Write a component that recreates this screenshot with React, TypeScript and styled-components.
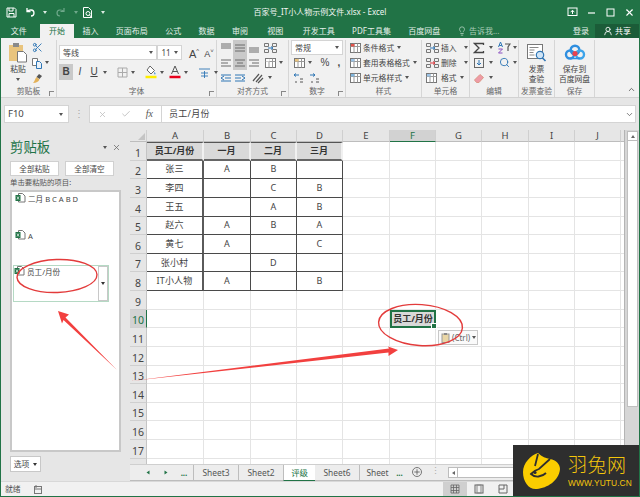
import React from 'react'
import styled, { createGlobalStyle } from 'styled-components'
import { Lightbulb, Scissors, X, Check, ChevronDown, ChevronUp, Plus, Search, UserRound } from 'lucide-react'

const GlobalStyle = createGlobalStyle`
  html, body {
    margin: 0;
    padding: 0;
    background: #e6e6e6;
  }
  * {
    box-sizing: border-box;
  }
`

const Page = styled.div`
  position: relative;
  width: 640px;
  height: 497px;
  display: flex;
  flex-direction: column;
  overflow: hidden;
  background: #e6e6e6;
  border-left: 1px solid #217346;
  border-right: 1px solid #217346;
  border-bottom: 1px solid #217346;
  color: #444;
  font-family: 'Noto Sans', 'Noto Sans CJK SC', sans-serif;
  font-size: 8px;
  line-height: 12px;
`

const Caret = styled.span<{ $color?: string; $ml?: number }>`
  display: inline-block;
  flex-shrink: 0;
  width: 0;
  height: 0;
  margin-left: ${(p) => p.$ml ?? 0}px;
  border-left: 2.5px solid transparent;
  border-right: 2.5px solid transparent;
  border-top: 3px solid ${(p) => p.$color ?? '#555'};
`

/* title bar */
const TitleBar = styled.div`
  height: 24px;
  display: grid;
  grid-template-columns: 1fr auto 1fr;
  align-items: center;
  background: #217346;
  color: #f2f7f4;
`

const QuickBar = styled.div`
  display: flex;
  align-items: center;
  padding-left: 4px;
`

const QuickSlot = styled.span<{ $w: number }>`
  width: ${(p) => p.$w}px;
  display: flex;
  justify-content: center;
  align-items: center;
`

const TitleText = styled.div`
  font-size: 8px;
  white-space: nowrap;
`

const WindowButtons = styled.div`
  display: flex;
  justify-content: flex-end;
`

const WindowButton = styled.span`
  width: 19px;
  display: flex;
  justify-content: center;
  align-items: center;
`

/* tab row */
const TabBar = styled.div`
  height: 14px;
  display: flex;
  align-items: stretch;
  background: #217346;
  color: #e4efe9;
  font-size: 8px;
  padding-left: 1px;
`

const Tab = styled.div<{ $active?: boolean; $mr?: number }>`
  padding: 0 8.7px;
  margin-right: ${(p) => p.$mr ?? 0}px;
  display: flex;
  align-items: center;
  white-space: nowrap;
  background: ${(p) => (p.$active ? '#f1f1f1' : 'transparent')};
  color: ${(p) => (p.$active ? '#217346' : 'inherit')};
`

const TellMe = styled.div`
  display: flex;
  align-items: center;
  gap: 2px;
  margin-left: 8px;
  color: #a9cdb8;
`

const TabRight = styled.div`
  margin-left: auto;
  display: flex;
  align-items: stretch;
`

const Login = styled.div`
  display: flex;
  align-items: center;
  margin-right: 6px;
`

const Share = styled.div`
  width: 44px;
  display: flex;
  align-items: center;
  justify-content: center;
  gap: 2px;
  background: #1b5c38;
  color: #fff;
`

/* ribbon */
const Ribbon = styled.div`
  position: relative;
  height: 60px;
  display: flex;
  background: #f1f1f1;
  border-bottom: 1px solid #d2d2d2;
`

const Group = styled.div<{ $w: number }>`
  width: ${(p) => p.$w}px;
  margin-top: 2px;
  display: flex;
  flex-direction: column;
  border-right: 1px solid #d6d6d6;
`

const GroupBody = styled.div<{ $pl?: number }>`
  flex: 1;
  display: flex;
  padding-left: ${(p) => p.$pl ?? 0}px;
`

const GroupStack = styled(GroupBody)`
  flex-direction: column;
`

const GroupLabel = styled.div`
  position: relative;
  height: 12px;
  text-align: center;
  color: #666;
  font-size: 7.8px;
  line-height: 12px;
  white-space: nowrap;
`

const Launcher = styled.span`
  position: absolute;
  right: 2px;
  bottom: 1px;
  width: 5px;
  height: 5px;
  border-left: 1px solid #888;
  border-top: 1px solid #888;
`

const BigButton = styled.div<{ $w: number }>`
  width: ${(p) => p.$w}px;
  display: flex;
  flex-direction: column;
  align-items: center;
  padding-top: 3px;
  font-size: 7.8px;
  line-height: 10px;
  text-align: center;
  white-space: nowrap;
`

const BigIcon = styled.span`
  height: 19px;
  margin-bottom: 2px;
  display: flex;
  align-items: center;
`

const SmallColumn = styled.div`
  display: flex;
  flex-direction: column;
`

const ToolRow = styled.div<{ $h?: number }>`
  height: ${(p) => p.$h ?? 15}px;
  display: flex;
  align-items: center;
  white-space: nowrap;
`

const Slot = styled.span<{ $w: number; $on?: boolean }>`
  width: ${(p) => p.$w}px;
  height: 100%;
  flex-shrink: 0;
  display: flex;
  align-items: center;
  justify-content: center;
  background: ${(p) => (p.$on ? '#c9c9c9' : 'transparent')};
`

const Glyph = styled.span<{ $bold?: boolean; $italic?: boolean; $under?: boolean }>`
  font-family: 'Liberation Sans', sans-serif;
  font-size: 10px;
  color: #444;
  font-weight: ${(p) => (p.$bold ? 700 : 400)};
  font-style: ${(p) => (p.$italic ? 'italic' : 'normal')};
  text-decoration: ${(p) => (p.$under ? 'underline' : 'none')};
`

const Select = styled.div<{ $w: number }>`
  width: ${(p) => p.$w}px;
  height: 15px;
  display: flex;
  align-items: center;
  justify-content: space-between;
  padding: 0 3px;
  background: #fff;
  border: 1px solid #d4d4d4;
  font-size: 8px;
`

const StyleRow = styled(ToolRow)`
  font-size: 7.8px;
  gap: 1px;
`

const Divider = styled.span`
  width: 1px;
  height: 13px;
  margin: 0 4px;
  background: #d6d6d6;
`

const Collapse = styled.span`
  position: absolute;
  right: 3px;
  bottom: 0;
  color: #555;
`

/* formula bar */
const FormulaBar = styled.div`
  height: 32px;
  display: flex;
  align-items: flex-start;
  padding: 7px 3px 0;
`

const NameBox = styled.div`
  width: 65px;
  height: 18px;
  display: flex;
  align-items: center;
  justify-content: space-between;
  padding: 0 5px 0 3px;
  background: #fff;
  border: 1px solid #d4d4d4;
  font-size: 9.5px;
`

const Grip = styled.span`
  width: 20px;
  text-align: center;
  color: #a8a8a8;
  line-height: 17px;
  font-size: 10px;
`

const FnPanel = styled.div`
  width: 72px;
  height: 18px;
  display: flex;
  align-items: center;
  justify-content: space-around;
  padding: 0 1px;
  background: #fff;
  border: 1px solid #d4d4d4;
  border-right: none;
  color: #bbb;
`

const FnMark = styled.span`
  font-family: 'Liberation Serif', serif;
  font-style: italic;
  font-size: 10px;
  color: #555;
`

const FormulaInput = styled.div`
  flex: 1;
  height: 18px;
  display: flex;
  align-items: center;
  justify-content: space-between;
  padding: 0 1px 0 7px;
  background: #fff;
  border: 1px solid #d4d4d4;
  font-size: 9px;
  letter-spacing: 0.3px;
`

/* body */
const Main = styled.div`
  flex: 1;
  min-height: 0;
  display: flex;
`

const Pane = styled.div`
  width: 129px;
  display: flex;
  flex-direction: column;
  padding: 10px 9px 9px;
`

const PaneHead = styled.div`
  height: 15px;
  display: flex;
  align-items: center;
`

const PaneTitle = styled.div`
  flex: 1;
  color: #217346;
  font-size: 13.4px;
  line-height: 15px;
`

const PaneClose = styled.span`
  margin-left: 5px;
  color: #666;
  display: flex;
`

const PaneButtons = styled.div`
  margin-top: 6px;
  display: flex;
  gap: 6px;
`

const PaneButton = styled.div`
  width: 49px;
  height: 15px;
  display: flex;
  align-items: center;
  justify-content: center;
  background: #fff;
  border: 1px solid #d0d0d0;
  font-size: 7.6px;
`

const PaneHint = styled.div`
  height: 12px;
  font-size: 7.4px;
  color: #555;
  white-space: nowrap;
`

const ClipList = styled.div`
  flex: 1;
  margin-top: 2px;
  width: 111px;
  display: flex;
  flex-direction: column;
  padding: 0 1px;
  background: #fff;
  border: 2px solid #c8c8c8;
`

const ClipItem = styled.div<{ $h: number; $on?: boolean }>`
  height: ${(p) => p.$h}px;
  margin-left: ${(p) => (p.$on ? 0 : 1)}px;
  width: ${(p) => (p.$on ? '96px' : 'auto')};
  display: flex;
  align-items: flex-start;
  gap: 2px;
  font-size: 7.6px;
  border: 1px solid ${(p) => (p.$on ? '#b5d9c4' : 'transparent')};
`

const ClipText = styled.span`
  flex: 1;
  white-space: nowrap;
`

const ClipDrop = styled.span`
  width: 10px;
  align-self: stretch;
  display: flex;
  align-items: center;
  justify-content: center;
  border: 1px solid #c8c8c8;
`

const OptionsButton = styled.div`
  margin-top: 4px;
  width: 31px;
  height: 16px;
  display: flex;
  align-items: center;
  justify-content: center;
  gap: 4px;
  background: #fff;
  border: 1px solid #c8c8c8;
  font-size: 7.8px;
`

const Sheet = styled.div`
  flex: 1;
  min-width: 0;
  display: flex;
  flex-direction: column;
`

const SheetBody = styled.div`
  flex: 1;
  min-height: 0;
  display: flex;
`

const CellGrid = styled.div`
  position: relative;
  width: 495px;
  display: grid;
  grid-template-columns: 17px 57px 47px 46px 46px 47px 46px 46px 47px 46px 46px 4px;
  grid-template-rows: 12px repeat(18, 18.63px);
  overflow: hidden;
  background: #fff;
  border-right: 1px solid #b4b4b4;
`

const Corner = styled.div`
  background: #e6e6e6;
  border-right: 1px solid #cfcfcf;
  border-bottom: 1px solid #bdbdbd;
  display: flex;
  align-items: flex-end;
  justify-content: flex-end;
  padding: 0 1px 1px 0;
  &::after {
    content: '';
    border-left: 7px solid transparent;
    border-bottom: 7px solid #c4c4c4;
  }
`

const ColHead = styled.div<{ $on?: boolean }>`
  display: flex;
  align-items: center;
  justify-content: center;
  font-size: 9.5px;
  background: ${(p) => (p.$on ? '#d2d2d2' : '#e6e6e6')};
  color: ${(p) => (p.$on ? '#217346' : '#444')};
  border-right: 1px solid #cfcfcf;
  border-bottom: 1px solid ${(p) => (p.$on ? '#217346' : '#bdbdbd')};
`

const RowHead = styled.div<{ $on?: boolean }>`
  display: flex;
  align-items: flex-end;
  justify-content: center;
  font-size: 10.5px;
  line-height: 14px;
  background: ${(p) => (p.$on ? '#d2d2d2' : '#e6e6e6')};
  color: ${(p) => (p.$on ? '#217346' : '#444')};
  border-bottom: 1px solid #cfcfcf;
  border-right: 1px solid ${(p) => (p.$on ? '#217346' : '#c4c4c4')};
`

const Cell = styled.div`
  border-right: 1.5px solid #e4e4e4;
  border-bottom: 1.5px solid #e4e4e4;
`

const DataCell = styled.div<{ $first?: boolean }>`
  display: flex;
  align-items: center;
  justify-content: center;
  font-size: 9px;
  letter-spacing: 0.2px;
  color: #444;
  border-right: ${(p) => (p.$first ? '2px solid #5a5a5a' : '1px solid #4a4a4a')};
  border-bottom: 1.5px solid #4a4a4a;
  white-space: nowrap;
`

const HeadCell = styled.div`
  display: flex;
  align-items: center;
  justify-content: center;
  font-size: 9px;
  font-weight: 700;
  color: #333;
  background: #d9d9d9;
  border-top: 1px solid #555;
  border-right: 2px solid #f0f0f0;
  border-bottom: 2px solid #666;
  white-space: nowrap;
`

const PickedCell = styled.div`
  position: relative;
  display: flex;
  align-items: center;
  justify-content: center;
  font-size: 9px;
  font-weight: 700;
  color: #333;
  background: #d9d9d9;
  border: 2px solid #217346;
  white-space: nowrap;
  &::after {
    content: '';
    position: absolute;
    right: -3px;
    bottom: -3px;
    width: 4px;
    height: 4px;
    background: #217346;
    border: 0.5px solid #fff;
  }
`

const PasteTag = styled.div`
  position: absolute;
  left: 308px;
  top: 200px;
  width: 40px;
  height: 15px;
  display: flex;
  align-items: center;
  gap: 1px;
  padding-left: 2px;
  background: #fafafa;
  border: 1px solid #c8c8c8;
  font-size: 8px;
  color: #666;
`

const ScrollBar = styled.div`
  flex: 1;
  display: flex;
  flex-direction: column;
  padding: 1px 1px 0 2px;
  background: #d6d6d6;
`

const ScrollUp = styled.div`
  height: 10px;
  display: flex;
  align-items: center;
  justify-content: center;
  background: #fff;
  border: 1px solid #bdbdbd;
  &::after {
    content: '';
    border-left: 2.5px solid transparent;
    border-right: 2.5px solid transparent;
    border-bottom: 3px solid #666;
  }
`

const ScrollThumb = styled.div`
  height: 266px;
  background: #fff;
  border: 1px solid #c0c0c0;
  border-top: none;
`

const SheetTabs = styled.div`
  height: 17px;
  display: flex;
  align-items: stretch;
  padding-left: 9px;
  background: #ededed;
  border-top: 1px solid #cfcfcf;
  border-bottom: 1px solid #bcbcbc;
`

const NavSlot = styled.span`
  width: 18px;
  display: flex;
  align-items: center;
  justify-content: center;
  color: #217346;
  font-size: 8px;
  font-weight: 700;
`

const SheetTab = styled.div<{ $w: number; $active?: boolean; $sep?: boolean }>`
  width: ${(p) => p.$w}px;
  display: flex;
  align-items: center;
  justify-content: center;
  font-size: 8.4px;
  background: ${(p) => (p.$active ? '#fff' : 'transparent')};
  color: ${(p) => (p.$active ? '#217346' : '#555')};
  border-bottom: ${(p) => (p.$active ? '1.5px solid #217346' : 'none')};
  border-left: ${(p) => (p.$sep ? '1px solid #bdbdbd' : 'none')};
  margin-bottom: ${(p) => (p.$active ? '-1px' : 0)};
`

const AddSheet = styled.span`
  width: 10px;
  height: 10px;
  margin: 2px 0 0 8px;
  display: flex;
  align-items: center;
  justify-content: center;
  border: 1px solid #777;
  border-radius: 50%;
  color: #555;
`

const SplitDots = styled.span`
  width: 26px;
  text-align: center;
  color: #aaa;
  font-size: 9px;
`

const HScroll = styled.div`
  flex: 1;
  margin: 2px 2px 2px 0;
  display: flex;
  background: #fff;
  border: 1px solid #bdbdbd;
`

const HScrollLeft = styled.span`
  width: 9px;
  display: flex;
  align-items: center;
  justify-content: center;
  border-right: 1px solid #bdbdbd;
  &::after {
    content: '';
    border-top: 2.5px solid transparent;
    border-bottom: 2.5px solid transparent;
    border-right: 3px solid #666;
  }
`

const StatusBar = styled.div`
  height: 15px;
  display: flex;
  align-items: center;
  padding-left: 4px;
  background: #f1f1f1;
  border-top: 1px solid #d8d8d8;
  font-size: 7.8px;
  color: #555;
`

const StatusSpacer = styled.span`
  flex: 1;
`

const ViewButtons = styled.div`
  display: flex;
  align-self: stretch;
  margin-right: 124px;
`

const ViewButton = styled.span<{ $on?: boolean }>`
  width: 24px;
  display: flex;
  align-items: center;
  justify-content: center;
  background: ${(p) => (p.$on ? '#cfcfcf' : 'transparent')};
`

/* things that lie over the window */
const Marks = styled.svg`
  position: absolute;
  left: -1px;
  top: 0;
  pointer-events: none;
`

const Badge = styled.div`
  position: absolute;
  right: -1px;
  bottom: -1px;
  width: 127px;
  height: 52px;
  display: flex;
  align-items: center;
  gap: 8px;
  padding-left: 10px;
  background: #2e2e2e;
  color: #f5c60b;
`

const BadgeText = styled.div`
  display: flex;
  flex-direction: column;
  width: 60px;
`

const BadgeName = styled.div`
  font-size: 19px;
  line-height: 22px;
  font-weight: 300;
  letter-spacing: 0.5px;
  white-space: nowrap;
`

const BadgeSite = styled.div`
  margin-top: 2px;
  font-family: 'Liberation Sans', sans-serif;
  font-size: 8.4px;
  line-height: 10px;
  letter-spacing: 0.1px;
  white-space: nowrap;
`

/* drawings */
const Ico = ({ w = 12, h = 12, children }: { w?: number; h?: number; children: React.ReactNode }) => (
  <svg width={w} height={h} viewBox={`0 0 ${w} ${h}`} fill="none" style={{ display: 'block', flexShrink: 0 }}>
    {children}
  </svg>
)

const Lines = ({ ys, xs, color = '#6a6a6a' }: { ys: number[]; xs: [number, number][]; color?: string }) => (
  <Ico w={12} h={12}>
    {ys.map((y, i) => (
      <path key={i} d={`M${xs[i][0]} ${y}H${xs[i][1]}`} stroke={color} />
    ))}
  </Ico>
)

const ExcelClip = () => (
  <Ico w={11} h={10}>
    <path d="M3.5.5h4l2.5 2.5v6H3.500z" fill="#fff" stroke="#777" />
    <rect x="0.500" y="2" width="5" height="6" fill="#217346" />
    <path d="M2 3.500l2 3M4 3.500l-2 3" stroke="#fff" strokeWidth=".7" />
  </Ico>
)

const PasteIcon = () => (
  <Ico w={20} h={21}>
    <rect x="1" y="3" width="14" height="16" fill="#e9c47d" />
    <rect x="5" y="1" width="6" height="4" fill="#8a8a8a" />
    <path d="M9.500 9.500h6l3 3v7.500h-9z" fill="#fff" stroke="#777" />
  </Ico>
)

const CopyIcon = () => (
  <Ico w={13} h={12}>
    <path d="M1.500 1.500h5v7h-5z" fill="#fff" stroke="#777" />
    <path d="M5.500 4.500h3l2 2v5h-5z" fill="#eaf1f8" stroke="#2f76b5" />
  </Ico>
)

const BrushIcon = () => (
  <Ico w={13} h={12}>
    <path d="M8 2l3 2-2.500 3-3-2z" fill="#555" />
    <path d="M5.500 5l3 2.500c-1 2-3 3.500-6.500 3.500 1.500-1.500 2-4 3.500-6z" fill="#e3b25a" />
  </Ico>
)

const WinRestore = () => (
  <Ico w={11} h={10}>
    <rect x="1" y="1" width="9" height="7.500" stroke="#fff" />
    <path d="M5.500 7V3.500M3.700 5.200L5.500 3.200l1.800 2" stroke="#fff" />
  </Ico>
)

const CloudMark = () => (
  <Ico w={22} h={17}>
    <circle cx="11" cy="6" r="4.300" stroke="#2f8fe0" strokeWidth="2.400" />
    <circle cx="6" cy="10.500" r="4" stroke="#2f8fe0" strokeWidth="2.400" />
    <circle cx="16" cy="10.500" r="4" stroke="#3da4ea" strokeWidth="2.400" />
    <circle cx="11" cy="9.500" r="2.600" fill="#e8434f" />
    <path d="M6 14.500h10" stroke="#2f8fe0" strokeWidth="1.500" />
  </Ico>
)

const InvoiceIcon = () => (
  <Ico w={21} h={20}>
    <rect x="1.500" y="1.500" width="15" height="14" fill="#fff" stroke="#777" />
    <path d="M3.500 4.500h9M3.500 7h5M3.500 9.500h4M3.500 12h5" stroke="#888" />
    <circle cx="14" cy="12" r="3.700" fill="#cfe4f6" stroke="#2f76b5" strokeWidth="1.200" />
    <path d="M16.500 15l3 3" stroke="#2f76b5" strokeWidth="1.600" />
  </Ico>
)

const StyleIcon = ({ accent }: { accent: string }) => (
  <Ico w={13} h={12}>
    <rect x="1.500" y="1.500" width="10" height="9" fill="#fff" stroke="#777" />
    <path d="M1.500 4.500h10M5 1.500v9M8.500 1.500v9" stroke="#999" />
    <rect x="2" y="2" width="3.500" height="2.500" fill={accent} />
  </Ico>
)

const CellOpIcon = ({ accent }: { accent: string }) => (
  <Ico w={15} h={12}>
    <path d="M1.500 1.500h4v3h-4zM1.500 7.500h4v3h-4zM9.500 1.500h4v3h-4zM9.500 7.500h4v3h-4z" stroke="#777" />
    <path d="M5 6h5M10 6L8 4.500M10 6L8 7.500" stroke={accent} />
  </Ico>
)

const months = ['A', 'B', 'C', 'D', 'E', 'F', 'G', 'H', 'I', 'J', '']
const table = [
  ['员工/月份', '一月', '二月', '三月'],
  ['张三', 'A', 'B', ''],
  ['李四', '', 'C', 'B'],
  ['王五', '', 'A', 'B'],
  ['赵六', 'A', 'B', 'A'],
  ['黄七', 'A', '', 'C'],
  ['张小村', '', 'D', ''],
  ['IT小人物', 'A', '', 'B'],
]
const rowNumbers = Array.from({ length: 18 }, (_, i) => i + 1)

const renderCell = (row: number, col: number) => {
  const key = `${row}-${col}`
  if (row <= 8 && col < 4) {
    const text = table[row - 1][col]
    return row === 1 ? (
      <HeadCell key={key}>{text}</HeadCell>
    ) : (
      <DataCell key={key} $first={col === 0}>
        {text}
      </DataCell>
    )
  }
  if (row === 10 && col === 5) return <PickedCell key={key}>员工/月份</PickedCell>
  return <Cell key={key} />
}

const Clip = () => (
  <Group $w={56}>
    <GroupBody $pl={6}>
      <BigButton $w={22}>
        <BigIcon>
          <PasteIcon />
        </BigIcon>
        粘贴
        <Caret style={{ marginTop: 4 }} />
      </BigButton>
      <SmallColumn>
        <ToolRow><Slot $w={16}><Scissors size={11} color="#2f76b5" /></Slot></ToolRow>
        <ToolRow><Slot $w={16}><CopyIcon /></Slot><Caret /></ToolRow>
        <ToolRow><Slot $w={16}><BrushIcon /></Slot></ToolRow>
      </SmallColumn>
    </GroupBody>
    <GroupLabel>剪贴板<Launcher /></GroupLabel>
  </Group>
)

const Font = () => (
  <Group $w={160}>
    <GroupStack $pl={2}>
      <ToolRow $h={20} style={{ paddingTop: 5 }}>
        <Select $w={101}>等线<Caret /></Select>
        <Select $w={25}>11<Caret /></Select>
        <Slot $w={16} style={{ marginLeft: 4 }}><Glyph style={{ fontSize: 11 }}>A<sup style={{ fontSize: 6 }}>^</sup></Glyph></Slot>
        <Slot $w={14}><Glyph style={{ fontSize: 9 }}>A<sup style={{ fontSize: 6 }}>˅</sup></Glyph></Slot>
      </ToolRow>
      <ToolRow $h={16} style={{ marginTop: 4 }}>
        <Slot $w={14} $on><Glyph $bold>B</Glyph></Slot>
        <Slot $w={14}><Glyph $italic>I</Glyph></Slot>
        <Slot $w={14}><Glyph $under>U</Glyph></Slot>
        <Caret $ml={2} />
        <Divider />
        <Slot $w={14}>
          <Ico w={11} h={11}><path d="M1 1h9v9H1zM5.500 1v9M1 5.500h9" stroke="#aaa" /></Ico>
        </Slot>
        <Caret $ml={2} />
        <Divider />
        <Slot $w={15}>
          <Ico w={12} h={14}>
            <path d="M5 1l4.500 4.500L6 9 2 5z" stroke="#666" fill="#fff" />
            <path d="M9.500 7c1 1 1.500 2 .5 2.500-1 0-1-1.500-.5-2.500z" fill="#3c8fd4" />
            <path d="M.5 12h11" stroke="#ffee00" strokeWidth="2.500" />
          </Ico>
        </Slot>
        <Caret $ml={2} />
        <Slot $w={15} style={{ marginLeft: 3 }}>
          <Ico w={12} h={14}>
            <path d="M2.500 9L6 1l3.500 8M3.800 6.500h4.400" stroke="#555" />
            <path d="M.5 12h11" stroke="#e8001c" strokeWidth="2.500" />
          </Ico>
        </Slot>
        <Caret $ml={2} />
        <Divider />
        <Slot $w={16}>
          <Ico w={13} h={13}>
            <path d="M1 3h11M6.500 5v7M3 7h7M3 10h7" stroke="#2f76b5" strokeWidth=".9" />
          </Ico>
        </Slot>
        <Caret $ml={2} />
      </ToolRow>
    </GroupStack>
    <GroupLabel>字体<Launcher /></GroupLabel>
  </Group>
)

const Align = () => (
  <Group $w={72}>
    <GroupBody $pl={2}>
      <SmallColumn>
        <ToolRow><Slot $w={14}><Lines ys={[2, 4, 6]} xs={[[1, 11], [1, 11], [1, 11]]} /></Slot><Slot $w={14} $on><Lines ys={[3, 6, 9]} xs={[[1, 11], [1, 11], [1, 11]]} /></Slot><Slot $w={14}><Lines ys={[6, 8, 10]} xs={[[1, 11], [1, 11], [1, 11]]} /></Slot><Slot $w={18}><CellOpIcon accent="#2f76b5" /></Slot></ToolRow>
        <ToolRow><Slot $w={14}><Lines ys={[3, 6, 9]} xs={[[1, 11], [1, 8], [1, 11]]} /></Slot><Slot $w={14} $on><Lines ys={[3, 6, 9]} xs={[[1, 11], [3, 9], [1, 11]]} /></Slot><Slot $w={14}><Lines ys={[3, 6, 9]} xs={[[1, 11], [4, 11], [1, 11]]} /></Slot><Slot $w={18}><StyleIcon accent="#fff" /></Slot><Caret /></ToolRow>
        <ToolRow>
          <Slot $w={14}><Ico><path d="M1 3h10M5 6h6M1 9h10M4 4L1 6l3 2" stroke="#2f76b5" /></Ico></Slot>
          <Slot $w={14}><Ico><path d="M1 3h10M1 6h6M1 9h10M8 4l3 2-3 2" stroke="#2f76b5" /></Ico></Slot>
          <Slot $w={21}><Ico w={14} h={12}><path d="M2 9l6-7M5 10l6-7M7 11l5-5" stroke="#555" strokeWidth="1.200" /></Ico></Slot>
          <Caret />
        </ToolRow>
      </SmallColumn>
    </GroupBody>
    <GroupLabel>对齐方式<Launcher /></GroupLabel>
  </Group>
)

const Numbers = () => (
  <Group $w={57}>
    <GroupStack $pl={2}>
      <ToolRow><Select $w={52}>常规<Caret /></Select></ToolRow>
      <ToolRow>
        <Slot $w={16}><StyleIcon accent="#e9c47d" /></Slot><Caret $ml={1} />
        <Slot $w={18} style={{ marginLeft: 4 }}><Glyph>%</Glyph></Slot>
        <Slot $w={10}><Glyph $bold>,</Glyph></Slot>
      </ToolRow>
      <ToolRow>
        <Slot $w={16}><Ico w={14} h={12}><path d="M7 3H2M2 3l2-1.500M2 3l2 1.500" stroke="#2f76b5" /><path d="M3 10h2M8 10h3M8 7h3" stroke="#555" /></Ico></Slot>
        <Slot $w={15}><Ico w={14} h={12}><path d="M2 3h5M7 3L5 1.500M7 3L5 4.500" stroke="#2f76b5" /><path d="M3 10h2M8 10h3M8 7h3" stroke="#555" /></Ico></Slot>
      </ToolRow>
    </GroupStack>
    <GroupLabel>数字<Launcher /></GroupLabel>
  </Group>
)

const Styles = () => (
  <Group $w={76}>
    <GroupStack $pl={3}>
      <StyleRow><StyleIcon accent="#e2534b" />条件格式<Caret $ml={2} /></StyleRow>
      <StyleRow><StyleIcon accent="#9cc3e6" />套用表格格式<Caret $ml={2} /></StyleRow>
      <StyleRow><StyleIcon accent="#7fb5dd" />单元格样式<Caret $ml={2} /></StyleRow>
    </GroupStack>
    <GroupLabel>样式</GroupLabel>
  </Group>
)

const Cells = () => (
  <Group $w={48}>
    <GroupStack $pl={3}>
      <StyleRow><CellOpIcon accent="#2f76b5" />插入<Caret $ml={6} /></StyleRow>
      <StyleRow><CellOpIcon accent="#d9343a" />删除<Caret $ml={6} /></StyleRow>
      <StyleRow><StyleIcon accent="#9cc3e6" /><span style={{ marginLeft: 2 }}>格式</span><Caret $ml={2} /></StyleRow>
    </GroupStack>
    <GroupLabel>单元格</GroupLabel>
  </Group>
)

const Editing = () => (
  <Group $w={49}>
    <GroupStack $pl={1}>
      <ToolRow>
        <Slot $w={16}><Ico><path d="M10.500 3V1.500h-9L6 6l-4.500 4.500h9V9" stroke="#444" strokeWidth="1.300" /></Ico></Slot>
        <Caret $ml={2} />
        <Slot $w={16} style={{ marginLeft: 3 }}>
          <Ico w={14} h={13}>
            <path d="M1.500 6L3.500 1l2 5M2.200 4.500h2.600" stroke="#2f76b5" />
            <path d="M1.500 8h4l-4 4h4" stroke="#8a4fc0" />
            <path d="M8 3h5L11 6v4" stroke="#555" strokeWidth="1.200" />
          </Ico>
        </Slot>
        <Caret $ml={1} />
      </ToolRow>
      <ToolRow>
        <Slot $w={16}><Ico><rect x="1.500" y="1.500" width="9" height="9" stroke="#666" /><path d="M6 3v5M4 6l2 2 2-2" stroke="#2f76b5" /></Ico></Slot>
        <Caret $ml={2} />
        <Slot $w={16} style={{ marginLeft: 3 }}><Search size={11} color="#2f76b5" strokeWidth={2} /></Slot>
        <Caret $ml={1} />
      </ToolRow>
      <ToolRow>
        <Slot $w={16}><Ico w={13} h={12}><path d="M1.500 8L7 2.500l3.500 3L6 10.500H3.500z" fill="#ee9aa6" stroke="#d98" /></Ico></Slot>
        <Caret $ml={2} />
      </ToolRow>
    </GroupStack>
    <GroupLabel>编辑</GroupLabel>
  </Group>
)

export default function App() {
  return (
    <Page>
      <GlobalStyle />
      <TitleBar>
        <QuickBar>
          <QuickSlot $w={12}>
            <Ico w={11} h={11}><path d="M1 1h7.500L10 2.500V10H1zM3 1v3h4V1M3 10V6.500h5V10" stroke="#fff" /></Ico>
          </QuickSlot>
          <QuickSlot $w={26}>
            <Ico w={11} h={10}><path d="M2 1v3.500h3.500M2 4.500c2-2 7-2.500 7 1.500 0 1.500-1 3-3 3" stroke="#fff" strokeWidth="1.300" /></Ico>
          </QuickSlot>
          <Caret $color="#dcebe2" />
          <QuickSlot $w={27}>
            <Ico w={11} h={10}><path d="M9 1v3.500H5.500M9 4.500c-2-2-7-2.500-7 1.500 0 1.500 1 3 3 3" stroke="#6ea88a" strokeWidth="1.200" /></Ico>
          </QuickSlot>
          <Caret $color="#6ea88a" />
          <QuickSlot $w={19}>
            <Ico w={11} h={13}><path d="M1.500 1.500h5l3 3v7h-8z" stroke="#fff" /><circle cx="6" cy="7.500" r="2" stroke="#fff" /><path d="M7.500 9l2.500 3" stroke="#fff" /></Ico>
          </QuickSlot>
          <QuickSlot $w={12}><Caret $color="#dcebe2" /></QuickSlot>
        </QuickBar>
        <TitleText>百家号_IT小人物示例文件.xlsx - Excel</TitleText>
        <WindowButtons>
          <WindowButton><WinRestore /></WindowButton>
          <WindowButton><Ico w={9} h={9}><path d="M1 5h7" stroke="#fff" strokeWidth="1.200" /></Ico></WindowButton>
          <WindowButton><Ico w={9} h={9}><rect x="1" y="1" width="7" height="7" stroke="#fff" /></Ico></WindowButton>
          <WindowButton><X size={11} color="#fff" strokeWidth={2.4} /></WindowButton>
        </WindowButtons>
      </TitleBar>

      <TabBar>
        <Tab $mr={5}>文件</Tab>
        <Tab $active>开始</Tab>
        <Tab>插入</Tab>
        <Tab>页面布局</Tab>
        <Tab>公式</Tab>
        <Tab>数据</Tab>
        <Tab $mr={2}>审阅</Tab>
        <Tab $mr={2}>视图</Tab>
        <Tab>开发工具</Tab>
        <Tab>PDF工具集</Tab>
        <Tab>百度网盘</Tab>
        <TellMe>
          <Lightbulb size={10} color="#a9cdb8" />
          告诉我...
        </TellMe>
        <TabRight>
          <Login>登录</Login>
          <Share>
            <UserRound size={10} color="#fff" />
            共享
          </Share>
        </TabRight>
      </TabBar>

      <Ribbon>
        <Clip />
        <Font />
        <Align />
        <Numbers />
        <Styles />
        <Cells />
        <Editing />
        <Group $w={36}>
          <GroupBody>
            <BigButton $w={35}>
              <BigIcon><InvoiceIcon /></BigIcon>
              发票
              <br />
              查验
            </BigButton>
          </GroupBody>
          <GroupLabel>发票查验</GroupLabel>
        </Group>
        <Group $w={40}>
          <GroupBody>
            <BigButton $w={39}>
              <BigIcon><CloudMark /></BigIcon>
              保存到
              <br />
              百度网盘
            </BigButton>
          </GroupBody>
          <GroupLabel>保存</GroupLabel>
        </Group>
        <Collapse><ChevronUp size={9} strokeWidth={2.2} /></Collapse>
      </Ribbon>

      <FormulaBar>
        <NameBox>F10<Caret /></NameBox>
        <Grip>⋮</Grip>
        <FnPanel>
          <X size={9} />
          <Check size={10} />
          <FnMark>fx</FnMark>
        </FnPanel>
        <FormulaInput>
          员工/月份
          <ChevronDown size={9} color="#555" />
        </FormulaInput>
      </FormulaBar>

      <Main>
        <Pane>
          <PaneHead>
            <PaneTitle>剪贴板</PaneTitle>
            <Caret />
            <PaneClose><X size={9} /></PaneClose>
          </PaneHead>
          <PaneButtons>
            <PaneButton>全部粘贴</PaneButton>
            <PaneButton>全部清空</PaneButton>
          </PaneButtons>
          <PaneHint>单击要粘贴的项目:</PaneHint>
          <ClipList>
            <ClipItem $h={37}>
              <ExcelClip />
              <ClipText>二月 B C A B D</ClipText>
            </ClipItem>
            <ClipItem $h={36}>
              <ExcelClip />
              <ClipText>A</ClipText>
            </ClipItem>
            <ClipItem $h={37} $on>
              <ExcelClip />
              <ClipText>员工/月份</ClipText>
              <ClipDrop><Caret $color="#333" /></ClipDrop>
            </ClipItem>
          </ClipList>
          <OptionsButton>选项<Caret $color="#333" /></OptionsButton>
        </Pane>

        <Sheet>
          <SheetBody>
            <CellGrid>
              <Corner />
              {months.map((m, i) => (
                <ColHead key={i} $on={m === 'F'}>{m}</ColHead>
              ))}
              {rowNumbers.map((row) => (
                <React.Fragment key={row}>
                  <RowHead $on={row === 10}>{row === 18 ? '' : row}</RowHead>
                  {months.map((_, col) => renderCell(row, col))}
                </React.Fragment>
              ))}
              <PasteTag>
                <Ico w={10} h={12}>
                  <rect x="1" y="2" width="7" height="8.500" fill="#e9d6a6" stroke="#999" />
                  <rect x="3" y="1" width="3" height="2" fill="#888" />
                </Ico>
                (Ctrl)
                <Caret $ml={1} />
              </PasteTag>
            </CellGrid>
            <ScrollBar>
              <ScrollUp />
              <ScrollThumb />
            </ScrollBar>
          </SheetBody>
          <SheetTabs>
            <NavSlot><Caret $color="#217346" style={{ transform: 'rotate(90deg)' }} /></NavSlot>
            <NavSlot><Caret $color="#217346" style={{ transform: 'rotate(-90deg)' }} /></NavSlot>
            <NavSlot>...</NavSlot>
            <SheetTab $w={45} $sep>Sheet3</SheetTab>
            <SheetTab $w={45} $sep>Sheet2</SheetTab>
            <SheetTab $w={32} $active $sep>评级</SheetTab>
            <SheetTab $w={44}>Sheet6</SheetTab>
            <SheetTab $w={36} $sep>Sheet</SheetTab>
            <NavSlot style={{ width: 9 }}>...</NavSlot>
            <AddSheet><Plus size={8} strokeWidth={2.4} /></AddSheet>
            <SplitDots>⋮</SplitDots>
            <HScroll><HScrollLeft /></HScroll>
          </SheetTabs>
        </Sheet>
      </Main>

      <StatusBar>
        就绪
        <Slot $w={12} style={{ marginLeft: 11 }}>
          <Ico w={9} h={10}><rect x="1.500" y="2.500" width="7" height="7" stroke="#777" /><path d="M1.500 5h7M3 1v3" stroke="#777" /></Ico>
        </Slot>
        <StatusSpacer />
        <ViewButtons>
          <ViewButton $on>
            <Ico w={10} h={10}><path d="M1 1h8v8H1zM1 3.500h8M1 6.500h8M3.500 1v8M6.500 1v8" stroke="#666" strokeWidth=".8" /></Ico>
          </ViewButton>
          <ViewButton>
            <Ico w={10} h={10}><rect x="1" y="1" width="8" height="8" stroke="#666" /><rect x="3" y="1" width="4" height="8" stroke="#888" /></Ico>
          </ViewButton>
          <ViewButton>
            <Ico w={10} h={10}><path d="M1 1h8v8H1zM1 5h5V1" stroke="#666" /></Ico>
          </ViewButton>
        </ViewButtons>
      </StatusBar>

      <Marks width="640" height="497" viewBox="0 0 640 497">
        <ellipse cx="57" cy="276" rx="40" ry="16.500" transform="rotate(-2 57 276)" fill="none" stroke="#e33b3b" strokeWidth="1.400" />
        <ellipse cx="420.500" cy="325" rx="42" ry="20.500" transform="rotate(4 420 325)" fill="none" stroke="#e33b3b" strokeWidth="1.400" />
        <path d="M58 311L69 314.500L65.500 317.500L117 370L63.500 320L62 323.500Z" fill="#f2403f" />
        <path d="M131 381L389 348.500L388 346.500L398 350L388.500 356L388.500 352.500Z" fill="#f2403f" />
      </Marks>

      <Badge>
        <svg width="37" height="37" viewBox="0 0 37 37" style={{ flexShrink: 0 }}>
          <path d="M15 0C8 2 0 10 0 19C0 29 6 37 14 36C24 35 36 28 37 16C37 11 33 7 27 6C23 5 19 4 15 0Z" fill="#fbcd00" />
          <path d="M15 1L12 13M27 6L16 16C12 17 10 19 8 21C12 25 19 24 23 20" stroke="#2e2e2e" strokeWidth="1.800" fill="none" />
          <circle cx="12" cy="19.500" r="1.600" fill="#2e2e2e" />
        </svg>
        <BadgeText>
          <BadgeName>羽兔网</BadgeName>
          <BadgeSite>WWW.YUTU.CN</BadgeSite>
        </BadgeText>
      </Badge>
    </Page>
  )
}
